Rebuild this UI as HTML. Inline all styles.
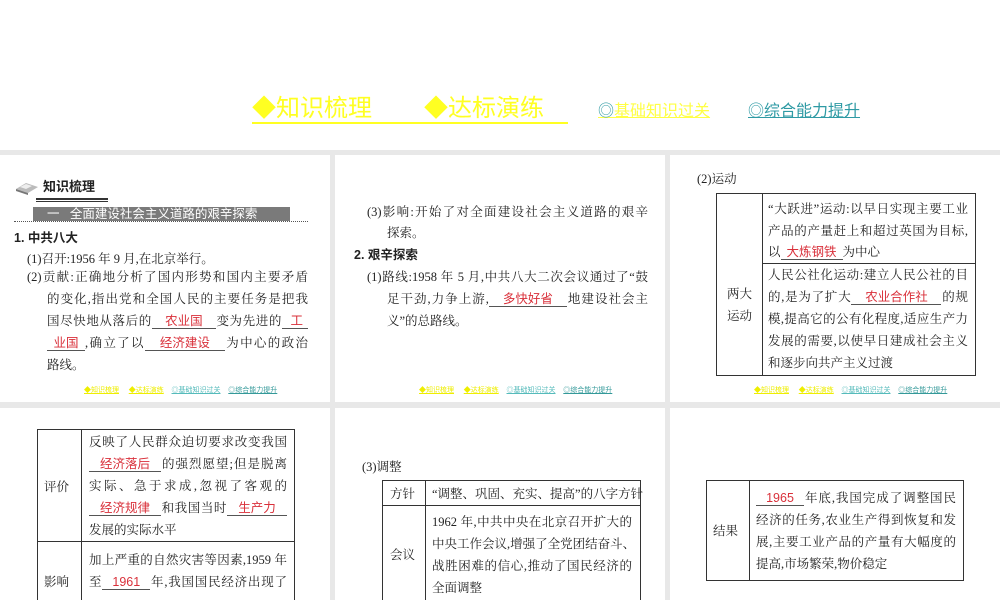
<!DOCTYPE html>
<html style="width:1000px;height:600px;overflow:hidden"><head><meta charset="utf-8"><style>
*{margin:0;padding:0;box-sizing:border-box}
body{width:1000px;height:600px;background:#e8e8e8;position:relative;overflow:hidden;font-family:"Liberation Serif","Noto Serif CJK SC",serif;color:#222}
.p{position:absolute;background:#fff;overflow:hidden}
.a{position:absolute;white-space:nowrap;font-size:12.5px;line-height:16px}
.j{text-align-last:justify;text-align:justify}
.r{color:#d9303a;font-family:"Liberation Sans","Noto Sans CJK SC",sans-serif;display:inline-block;border-bottom:1px solid #555;text-align:center;text-align-last:center;line-height:14px}
.b{font-family:"Liberation Sans","Noto Sans CJK SC",sans-serif;font-weight:bold}
.ln{position:absolute;background:#333}
.nav{position:absolute;font-size:7px;font-family:"Liberation Sans","Noto Sans CJK SC",sans-serif;white-space:nowrap}
.nav span{text-decoration:underline}
</style></head><body>
<div class="p" style="left:0;top:0;width:1000px;height:150px"></div>
<div style="position:absolute;left:252px;top:95px;font-family:'Liberation Sans','Noto Sans CJK SC',sans-serif;font-size:24px;line-height:27px;color:#ffff22;white-space:nowrap">
<span style="border-bottom:2px solid #ffff22;padding-right:52px">◆知识梳理</span><span style="border-bottom:2px solid #ffff22;padding-right:24px">◆达标演练</span></div>
<div style="position:absolute;left:598px;top:103px;font-family:'Liberation Sans','Noto Sans CJK SC',sans-serif;font-size:16px;line-height:18px;white-space:nowrap;text-decoration:underline;color:#ffff44"><span style="color:#3aa0a8">◎</span>基础知识过关</div>
<div style="position:absolute;left:748px;top:103px;font-family:'Liberation Sans','Noto Sans CJK SC',sans-serif;font-size:16px;line-height:18px;white-space:nowrap;text-decoration:underline;color:#2e9aa4">◎综合能力提升</div>

<div class="p" style="left:0;top:155px;width:330px;height:247px"></div>
<div class="p" style="left:335px;top:155px;width:330px;height:247px"></div>
<div class="p" style="left:670px;top:155px;width:330px;height:247px"></div>
<div class="p" style="left:0;top:408px;width:330px;height:192px"></div>
<div class="p" style="left:335px;top:408px;width:330px;height:192px"></div>
<div class="p" style="left:670px;top:408px;width:330px;height:192px"></div>

<!-- panel 1 -->
<svg style="position:absolute;left:14px;top:180px" width="26" height="16"><polygon points="2,9 12,3 24,7 14,13" fill="#bbb"/><polygon points="2,9 14,13 14,15 2,11" fill="#777"/><polygon points="6,7 12,4 18,6 12,9" fill="#eee"/></svg>
<div class="a b" style="left:43px;top:179px;font-size:13px">知识梳理</div>
<div class="ln" style="left:36px;top:198px;width:72px;height:1.5px"></div>
<div class="ln" style="left:36px;top:201px;width:72px;height:1px"></div>
<div style="position:absolute;left:33px;top:207px;width:257px;height:14px;background:#7a7a7a;color:#fff;font-family:'Liberation Sans','Noto Sans CJK SC',sans-serif;font-size:12.5px;line-height:14px;padding-left:14px;white-space:nowrap">一&nbsp;&nbsp;&nbsp;全面建设社会主义道路的艰辛探索</div>
<div style="position:absolute;left:14px;top:221px;width:294px;border-top:1px dotted #555"></div>
<div class="a b" style="left:14px;top:230px">1. 中共八大</div>
<div class="a" style="left:27px;top:251px">(1)召开:1956 年 9 月,在北京举行。</div>
<div class="a j" style="left:27px;top:269px;width:281px">(2)贡献:正确地分析了国内形势和国内主要矛盾</div>
<div class="a j" style="left:47px;top:291px;width:261px">的变化,指出党和全国人民的主要任务是把我</div>
<div class="a j" style="left:47px;top:313px;width:261px">国尽快地从落后的<span class="r" style="width:64px">农业国</span>变为先进的<span class="r" style="width:26px">&nbsp;工</span></div>
<div class="a j" style="left:47px;top:335px;width:261px"><span class="r" style="width:38px">业国</span>,确立了以<span class="r" style="width:80px">经济建设</span>为中心的政治</div>
<div class="a" style="left:47px;top:357px">路线。</div>

<!-- panel 2 -->
<div class="a j" style="left:367px;top:204px;width:281px">(3)影响:开始了对全面建设社会主义道路的艰辛</div>
<div class="a" style="left:387px;top:225px">探索。</div>
<div class="a b" style="left:354px;top:247px">2. 艰辛探索</div>
<div class="a j" style="left:367px;top:269px;width:281px">(1)路线:1958 年 5 月,中共八大二次会议通过了“鼓</div>
<div class="a j" style="left:387px;top:291px;width:261px">足干劲,力争上游,<span class="r" style="width:78px">多快好省</span>地建设社会主</div>
<div class="a" style="left:387px;top:313px">义”的总路线。</div>

<!-- panel 3 -->
<div class="a" style="left:697px;top:171px">(2)运动</div>
<div style="position:absolute;left:716px;top:193px;width:260px;height:183px;border:1px solid #333"></div>
<div class="ln" style="left:762px;top:193px;width:1px;height:183px"></div>
<div class="ln" style="left:762px;top:263px;width:214px;height:1px"></div>
<div class="a" style="left:727px;top:283px;line-height:22px">两大<br>运动</div>
<div class="a j" style="left:768px;top:201px;width:200px">“大跃进”运动:以早日实现主要工业</div>
<div class="a j" style="left:768px;top:223px;width:200px">产品的产量赶上和超过英国为目标,</div>
<div class="a" style="left:768px;top:244px">以<span class="r" style="width:62px">大炼钢铁</span>为中心</div>
<div class="a j" style="left:768px;top:267px;width:200px">人民公社化运动:建立人民公社的目</div>
<div class="a j" style="left:768px;top:289px;width:200px">的,是为了扩大<span class="r" style="width:90px">农业合作社</span>的规</div>
<div class="a j" style="left:768px;top:311px;width:200px">模,提高它的公有化程度,适应生产力</div>
<div class="a j" style="left:768px;top:333px;width:200px">发展的需要,以使早日建成社会主义</div>
<div class="a" style="left:768px;top:355px">和逐步向共产主义过渡</div>

<div class="nav" style="left:84px;top:385px;color:#ee0"><span>◆知识梳理</span>&nbsp;&nbsp;&nbsp;&nbsp;&nbsp;<span>◆达标演练</span>&nbsp;&nbsp;&nbsp;&nbsp;<span style="color:#5bb">◎基础知识过关</span>&nbsp;&nbsp;&nbsp;&nbsp;<span style="color:#399">◎综合能力提升</span></div>
<div class="nav" style="left:419px;top:385px;color:#ee0"><span>◆知识梳理</span>&nbsp;&nbsp;&nbsp;&nbsp;&nbsp;<span>◆达标演练</span>&nbsp;&nbsp;&nbsp;&nbsp;<span style="color:#5bb">◎基础知识过关</span>&nbsp;&nbsp;&nbsp;&nbsp;<span style="color:#399">◎综合能力提升</span></div>
<div class="nav" style="left:754px;top:385px;color:#ee0"><span>◆知识梳理</span>&nbsp;&nbsp;&nbsp;&nbsp;&nbsp;<span>◆达标演练</span>&nbsp;&nbsp;&nbsp;&nbsp;<span style="color:#5bb">◎基础知识过关</span>&nbsp;&nbsp;&nbsp;&nbsp;<span style="color:#399">◎综合能力提升</span></div>

<!-- bottom 1 -->
<div style="position:absolute;left:37px;top:429px;width:258px;height:171px;border:1px solid #333;border-bottom:none"></div>
<div class="ln" style="left:81px;top:429px;width:1px;height:171px"></div>
<div class="ln" style="left:37px;top:541px;width:258px;height:1px"></div>
<div class="a" style="left:44px;top:479px">评价</div>
<div class="a" style="left:44px;top:574px">影响</div>
<div class="a j" style="left:89px;top:434px;width:198px">反映了人民群众迫切要求改变我国</div>
<div class="a j" style="left:89px;top:456px;width:198px"><span class="r" style="width:72px">经济落后</span>的强烈愿望;但是脱离</div>
<div class="a j" style="left:89px;top:478px;width:198px">实际、急于求成,忽视了客观的</div>
<div class="a j" style="left:89px;top:500px;width:198px"><span class="r" style="width:72px">经济规律</span>和我国当时<span class="r" style="width:60px">生产力</span></div>
<div class="a" style="left:89px;top:522px">发展的实际水平</div>
<div class="a j" style="left:89px;top:552px;width:198px">加上严重的自然灾害等因素,1959 年</div>
<div class="a j" style="left:89px;top:574px;width:198px">至<span class="r" style="width:48px">1961</span>年,我国国民经济出现了</div>

<!-- bottom 2 -->
<div class="a" style="left:362px;top:459px">(3)调整</div>
<div style="position:absolute;left:382px;top:480px;width:259px;height:120px;border:1px solid #333;border-bottom:none"></div>
<div class="ln" style="left:425px;top:480px;width:1px;height:120px"></div>
<div class="ln" style="left:382px;top:505px;width:259px;height:1px"></div>
<div class="a" style="left:390px;top:486px">方针</div>
<div class="a" style="left:390px;top:547px">会议</div>
<div class="a j" style="left:432px;top:486px;width:196px">“调整、巩固、充实、提高”的八字方针</div>
<div class="a j" style="left:432px;top:514px;width:200px">1962 年,中共中央在北京召开扩大的</div>
<div class="a j" style="left:432px;top:536px;width:200px">中央工作会议,增强了全党团结奋斗、</div>
<div class="a j" style="left:432px;top:558px;width:200px">战胜困难的信心,推动了国民经济的</div>
<div class="a" style="left:432px;top:580px">全面调整</div>

<!-- bottom 3 -->
<div style="position:absolute;left:706px;top:480px;width:258px;height:101px;border:1px solid #333"></div>
<div class="ln" style="left:749px;top:480px;width:1px;height:101px"></div>
<div class="a" style="left:713px;top:523px">结果</div>
<div class="a j" style="left:756px;top:490px;width:200px"><span class="r" style="width:48px">1965</span>年底,我国完成了调整国民</div>
<div class="a j" style="left:756px;top:512px;width:200px">经济的任务,农业生产得到恢复和发</div>
<div class="a j" style="left:756px;top:534px;width:200px">展,主要工业产品的产量有大幅度的</div>
<div class="a" style="left:756px;top:556px">提高,市场繁荣,物价稳定</div>
</body></html>
